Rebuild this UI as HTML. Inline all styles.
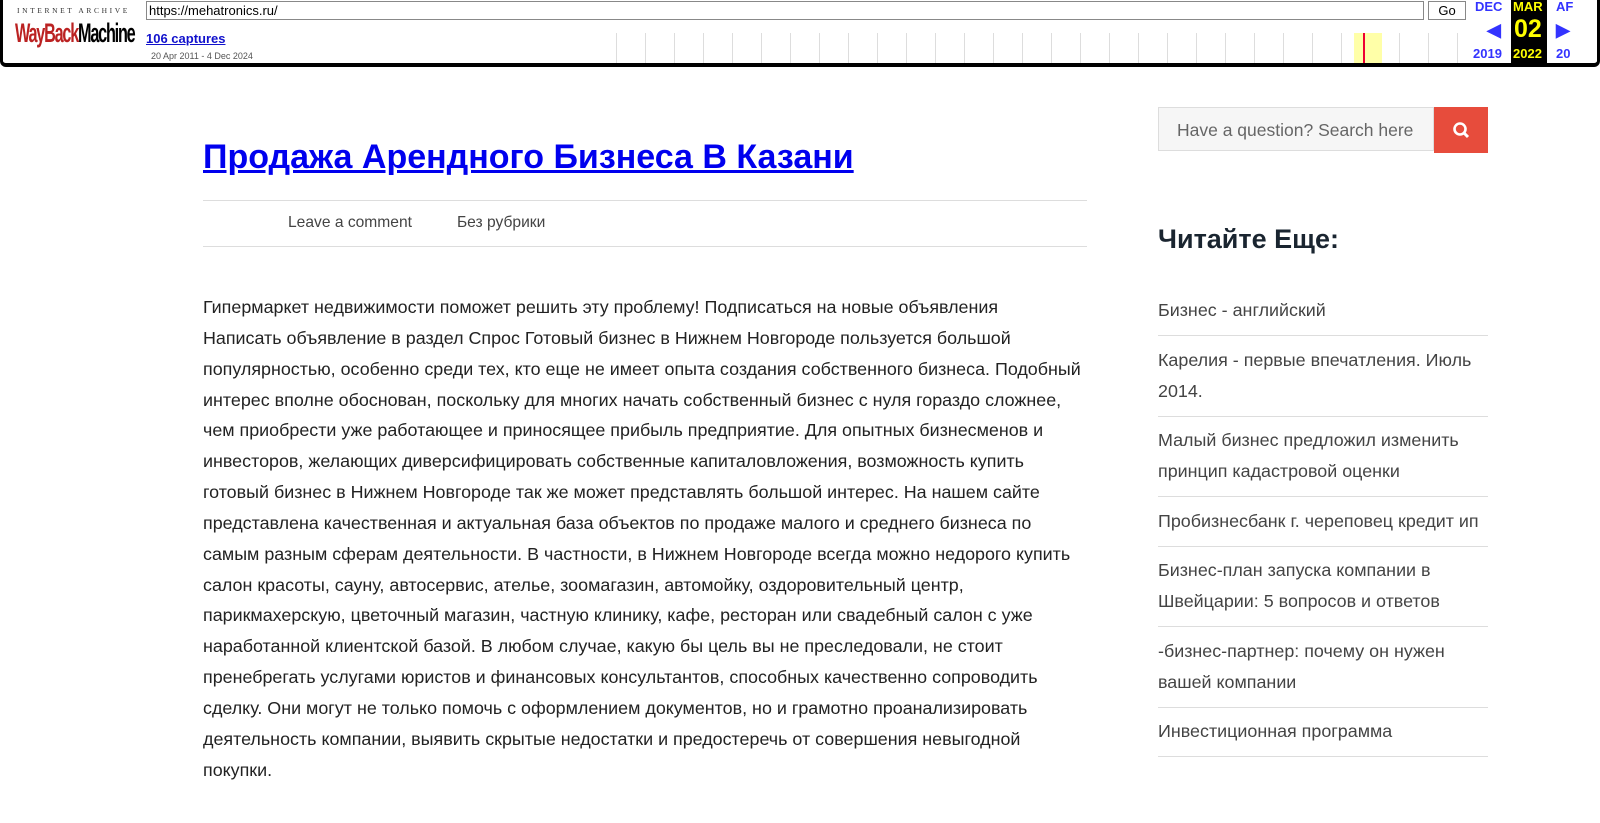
<!DOCTYPE html>
<html><head><meta charset="utf-8"><style>
body{margin:0;background:#fff;font-family:"Liberation Sans",Arial,sans-serif;}
#wb{position:absolute;left:0;top:0;height:63px;background:#fff;border-bottom:4px solid #000;border-left:3px solid #000;border-right:3px solid #000;width:1594px;border-radius:0 0 6px 6px;overflow:hidden}
.ia{position:absolute;left:14px;top:6px;font-size:7.5px;letter-spacing:2.6px;color:#333;font-family:"Liberation Serif",serif;}
.wm{position:absolute;left:12px;top:18px;font-size:27px;font-weight:bold;letter-spacing:-2px;transform:scaleX(.6);transform-origin:left;white-space:nowrap}
.url{position:absolute;left:143px;top:1px;width:1274px;height:17px;border:1px solid #888;font-size:13px;line-height:17px;padding-left:2px;}
.go{position:absolute;left:1425px;top:1px;width:36px;height:17px;border:1px solid #888;font-size:13px;text-align:center;line-height:17px;background:#fff;}
.cap{position:absolute;left:143px;top:31px;font-size:13px;font-weight:bold;color:#11c;text-decoration:underline;}
.rng{position:absolute;left:148px;top:51px;font-size:9px;color:#555;}
.m{position:absolute;font-size:13px;font-weight:bold;color:#33f;}
.cur{position:absolute;left:1508px;top:0;width:36px;height:63px;background:#000;}
h1{position:absolute;left:203px;top:138px;margin:0;font-size:34px;font-weight:bold;color:#00e;text-decoration:underline;white-space:nowrap}
.meta{position:absolute;left:203px;top:200px;width:884px;height:45px;border-top:1px solid #ddd;border-bottom:1px solid #ddd;font-size:15.6px;color:#444;line-height:44px;}
.txt{position:absolute;left:203px;top:292px;width:900px;font-size:17.9px;line-height:30.85px;color:#222;white-space:nowrap}
.srch{position:absolute;left:1158px;top:107px;width:276px;height:44px;background:#f6f6f6;border:1px solid #ddd;box-sizing:border-box;font-size:17.5px;color:#666;line-height:44px;padding-left:18px;white-space:nowrap}
.sb{position:absolute;left:1434px;top:107px;width:54px;height:46px;background:#e74c3c;}
h3{position:absolute;left:1158px;top:224px;margin:0;font-size:27px;font-weight:bold;color:#1a2530;white-space:nowrap}
ul{position:absolute;left:1158px;top:295px;width:330px;margin:0;padding:0;list-style:none;font-size:17.9px;color:#444;line-height:31px;white-space:nowrap}
li{border-bottom:1px solid #ddd;padding:0 0 9px;margin-bottom:8.5px;}
</style></head><body>
<div id="wb">
<div class="ia">INTERNET ARCHIVE</div>
<div class="wm"><span style="color:#b22">WayBack</span><span style="color:#000">Machine</span></div>
<div class="url">https://mehatronics.ru/</div>
<div class="go">Go</div>
<div class="cap">106 captures</div>
<div class="rng">20 Apr 2011 - 4 Dec 2024</div>
<div style="position:absolute;left:613px;top:33px;width:850px;height:30px;background:repeating-linear-gradient(90deg,#ddd 0 1px,transparent 1px 29px)"></div>
<div style="position:absolute;left:1351px;top:33px;width:28px;height:30px;background:#ffffa8"></div>
<div style="position:absolute;left:1360px;top:33px;width:2px;height:30px;background:#e03"></div>
<div class="m" style="left:1472px;top:-1px">DEC</div>
<div class="m" style="left:1484px;top:20px;font-size:18px">◀</div>
<div class="m" style="left:1470px;top:46px">2019</div>
<div class="cur"></div>
<div class="m" style="left:1510px;top:-1px;color:#ff0">MAR</div>
<div class="m" style="left:1511px;top:15px;color:#ff0;font-size:25px">02</div>
<div class="m" style="left:1510px;top:46px;color:#ff0">2022</div>
<div class="m" style="left:1553px;top:-1px">AF</div>
<div class="m" style="left:1553px;top:20px;font-size:18px">▶</div>
<div class="m" style="left:1553px;top:46px">20</div>
</div>
<h1>Продажа Арендного Бизнеса В Казани</h1>
<div class="meta"><span style="margin-left:85px">Leave a comment</span><span style="margin-left:45px">Без рубрики</span></div>
<div class="txt">Гипермаркет недвижимости поможет решить эту проблему! Подписаться на новые объявления<br>Написать объявление в раздел Спрос Готовый бизнес в Нижнем Новгороде пользуется большой<br>популярностью, особенно среди тех, кто еще не имеет опыта создания собственного бизнеса. Подобный<br>интерес вполне обоснован, поскольку для многих начать собственный бизнес с нуля гораздо сложнее,<br>чем приобрести уже работающее и приносящее прибыль предприятие. Для опытных бизнесменов и<br>инвесторов, желающих диверсифицировать собственные капиталовложения, возможность купить<br>готовый бизнес в Нижнем Новгороде так же может представлять большой интерес. На нашем сайте<br>представлена качественная и актуальная база объектов по продаже малого и среднего бизнеса по<br>самым разным сферам деятельности. В частности, в Нижнем Новгороде всегда можно недорого купить<br>салон красоты, сауну, автосервис, ателье, зоомагазин, автомойку, оздоровительный центр,<br>парикмахерскую, цветочный магазин, частную клинику, кафе, ресторан или свадебный салон с уже<br>наработанной клиентской базой. В любом случае, какую бы цель вы не преследовали, не стоит<br>пренебрегать услугами юристов и финансовых консультантов, способных качественно сопроводить<br>сделку. Они могут не только помочь с оформлением документов, но и грамотно проанализировать<br>деятельность компании, выявить скрытые недостатки и предостеречь от совершения невыгодной<br>покупки.</div>
<div class="srch">Have a question? Search here</div>
<div class="sb"><svg width="54" height="46"><circle cx="26" cy="22" r="5.5" fill="none" stroke="#fff" stroke-width="2.6"/><line x1="30" y1="26" x2="34" y2="30" stroke="#fff" stroke-width="3"/></svg></div>
<h3>Читайте Еще:</h3>
<ul>
<li>Бизнес - английский</li>
<li>Карелия - первые впечатления. Июль<br>2014.</li>
<li>Малый бизнес предложил изменить<br>принцип кадастровой оценки</li>
<li>Пробизнесбанк г. череповец кредит ип</li>
<li>Бизнес-план запуска компании в<br>Швейцарии: 5 вопросов и ответов</li>
<li>-бизнес-партнер: почему он нужен<br>вашей компании</li>
<li>Инвестиционная программа</li>
</ul>
</body></html>
